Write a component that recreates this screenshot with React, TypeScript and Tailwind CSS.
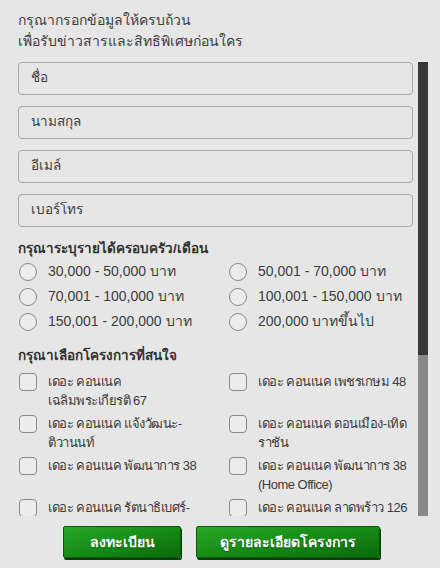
import React from "react";

const INCOMES = [
  "30,000 - 50,000 บาท",
  "50,001 - 70,000 บาท",
  "70,001 - 100,000 บาท",
  "100,001 - 150,000 บาท",
  "150,001 - 200,000 บาท",
  "200,000 บาทขึ้นไป",
];

const PROJECTS: string[][] = [
  ["เดอะ คอนเนค", "เฉลิมพระเกียรติ 67"],
  ["เดอะ คอนเนค เพชรเกษม 48"],
  ["เดอะ คอนเนค แจ้งวัฒนะ-", "ติวานนท์"],
  ["เดอะ คอนเนค ดอนเมือง-เทิด", "ราชัน"],
  ["เดอะ คอนเนค พัฒนาการ 38"],
  ["เดอะ คอนเนค พัฒนาการ 38", "(Home Office)"],
  ["เดอะ คอนเนค รัตนาธิเบศร์-", "ท่าอิฐ"],
  ["เดอะ คอนเนค ลาดพร้าว 126"],
];

const FIELDS = ["ชื่อ", "นามสกุล", "อีเมล์", "เบอร์โทร"];

export default function App() {
  return (
    <div
      className="w-[440px] h-[568px] bg-[#e6e6e6] text-[#3d3d3d] overflow-hidden"
      style={{ fontFamily: '"Liberation Sans", "Noto Sans", sans-serif' }}
    >
      <div className="pt-[10px] pl-[18px] text-[14px] leading-[21px]">
        <p>กรุณากรอกข้อมูลให้ครบถ้วน</p>
        <p>เพื่อรับข่าวสารและสิทธิพิเศษก่อนใคร</p>
      </div>

      <div className="mt-[10px] ml-[18px] flex h-[454px]">
        <div className="w-[395px] overflow-hidden">
          <div className="flex flex-col gap-[11px]">
            {FIELDS.map((f) => (
              <div
                key={f}
                className="h-[33px] rounded-[4px] border border-[#a8a8a8] bg-[#e6e6e6] pl-[12px] flex items-center text-[13.5px]"
              >
                {f}
              </div>
            ))}
          </div>

          <h3 className="mt-[12px] text-[13.5px] leading-[20px] font-bold text-[#333]">
            กรุณาระบุรายได้ครอบครัว/เดือน
          </h3>
          <div className="grid grid-cols-[210px_1fr]">
            {INCOMES.map((t) => (
              <div key={t} className="h-[25px] flex items-center gap-[11px] text-[14px] whitespace-nowrap">
                <span className="ml-[1px] w-[18px] h-[18px] rounded-full border border-[#8a8a8a] bg-[#ececec] shrink-0" />
                <span>{t}</span>
              </div>
            ))}
          </div>

          <h3 className="mt-[12px] text-[13.5px] leading-[20px] font-bold text-[#333]">
            กรุณาเลือกโครงการที่สนใจ
          </h3>
          <div className="mt-[6px] grid grid-cols-[210px_1fr] gap-y-[4px]">
            {PROJECTS.map((lines, i) => (
              <div key={i} className="flex items-start gap-[11px] text-[13px] leading-[19px] h-[38px] whitespace-nowrap tracking-[-0.5px]">
                <span className="ml-[1px] mt-[1px] w-[18px] h-[18px] rounded-[4px] border border-[#8a8a8a] bg-[#ececec] shrink-0" />
                <span>
                  {lines.map((l, j) => (
                    <span key={j} className="block">
                      {l}
                    </span>
                  ))}
                </span>
              </div>
            ))}
          </div>
        </div>

        <div className="ml-[5px] w-[10px] flex flex-col">
          <div className="h-[293px] bg-[#383838]" />
          <div className="flex-1 bg-[#888]" />
        </div>
      </div>

      <div className="mt-[10px] flex justify-center gap-[15px] pl-[3px]">
        <button className="w-[118px] h-[32px] rounded-[2px] border border-[#0a5a0a] bg-gradient-to-br from-[#27a827] via-[#168c16] to-[#0a6a0a] text-white font-bold text-[14px] shadow-[1px_2px_0_#0a3d0a] [text-shadow:0_1px_1px_rgba(0,0,0,0.4)]">
          ลงทะเบียน
        </button>
        <button className="w-[184px] h-[32px] rounded-[2px] border border-[#0a5a0a] bg-gradient-to-br from-[#27a827] via-[#168c16] to-[#0a6a0a] text-white font-bold text-[14px] shadow-[1px_2px_0_#0a3d0a] [text-shadow:0_1px_1px_rgba(0,0,0,0.4)]">
          ดูรายละเอียดโครงการ
        </button>
      </div>
    </div>
  );
}
